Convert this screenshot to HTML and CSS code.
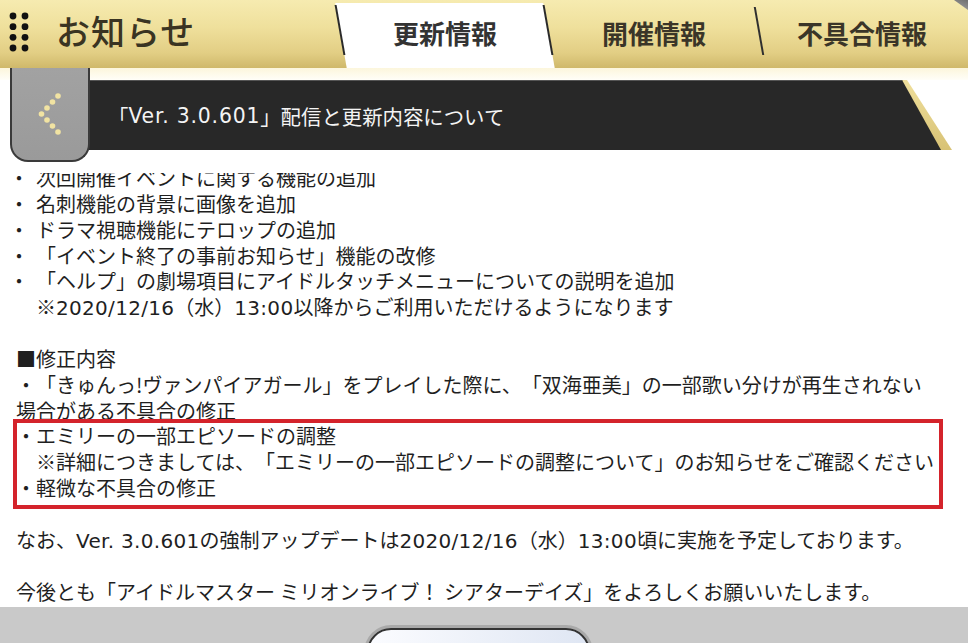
FILE: index.html
```html
<!DOCTYPE html>
<html lang="ja">
<head>
<meta charset="utf-8">
<title>お知らせ</title>
<link rel="stylesheet" href="styles.css">
</head>
<body>
<div class="app">
  <header class="topbar">
    <div class="brand">
      <svg class="menu-dots" width="22" height="44" viewBox="0 0 22 44" aria-hidden="true">
        <circle cx="5" cy="4" r="3.4"/><circle cx="17" cy="4" r="3.4"/>
        <circle cx="5" cy="14.7" r="3.4"/><circle cx="17" cy="14.7" r="3.4"/>
        <circle cx="5" cy="25.3" r="3.4"/><circle cx="17" cy="25.3" r="3.4"/>
        <circle cx="5" cy="36" r="3.4"/><circle cx="17" cy="36" r="3.4"/>
      </svg>
      <h1 class="title">お知らせ</h1>
    </div>
    <nav class="tabs">
      <div class="tab tab-active">更新情報</div>
      <div class="tab tab-2">開催情報</div>
      <div class="tab tab-3">不具合情報</div>
    </nav>
    <span class="corner"></span>
  </header>

  <div class="strip"></div>

  <div class="banner">
    <div class="banner-inner">「<span class="lat">Ver. 3.0.601</span>」配信と更新内容について</div>
  </div>

  <div class="back" aria-label="戻る">
    <svg width="24" height="44" viewBox="0 0 24 44" aria-hidden="true">
      <circle cx="20" cy="4" r="2.8"/><circle cx="14.5" cy="10" r="2.8"/>
      <circle cx="9" cy="16" r="2.8"/><circle cx="3.5" cy="22" r="2.8"/>
      <circle cx="9" cy="28" r="2.8"/><circle cx="14.5" cy="34" r="2.8"/>
      <circle cx="20" cy="40" r="2.8"/>
    </svg>
  </div>

  <main class="content">
    <div class="scroll">
      <p class="line"><span class="dot">・</span>次回開催イベントに関する機能の追加</p>
      <p class="line"><span class="dot">・</span>名刺機能の背景に画像を追加</p>
      <p class="line"><span class="dot">・</span>ドラマ視聴機能にテロップの追加</p>
      <p class="line"><span class="dot">・</span>「イベント終了の事前お知らせ」機能の改修</p>
      <p class="line"><span class="dot">・</span>「ヘルプ」の劇場項目にアイドルタッチメニューについての説明を追加</p>
      <p class="line">　※<span class="lat">2020/12/16</span>（水）<span class="lat">13:00</span>以降からご利用いただけるようになります</p>
      <p class="line blank"></p>
      <p class="line">■修正内容</p>
      <p class="line">・「きゅんっ!ヴァンパイアガール」をプレイした際に、「双海亜美」の一部歌い分けが再生されない</p>
      <p class="line">場合がある不具合の修正</p>
      <div class="highlight">
        <p class="line">・エミリーの一部エピソードの調整</p>
        <p class="line">　※詳細につきましては、「エミリーの一部エピソードの調整について」のお知らせをご確認ください</p>
        <p class="line">・軽微な不具合の修正</p>
      </div>
      <p class="line blank"></p>
      <p class="line">なお、<span class="lat">Ver. 3.0.601</span>の強制アップデートは<span class="lat">2020/12/16</span>（水）<span class="lat">13:00</span>頃に実施を予定しております。</p>
      <p class="line blank"></p>
      <p class="line">今後とも「アイドルマスター ミリオンライブ！ シアターデイズ」をよろしくお願いいたします。</p>
    </div>
  </main>

  <footer class="footer">
    <div class="footer-btn"></div>
  </footer>
</div>
</body>
</html>
```

FILE: styles.css
```css
* {
  box-sizing: border-box;
}

html, body {
  margin: 0;
  padding: 0;
  background: #ffffff;
}

body {
  font-family: "Noto Sans CJK JP", "Noto Sans", sans-serif;
  color: #222222;
  text-spacing-trim: space-all;
}

.lat {
  font-family: "DejaVu Sans", "Noto Sans CJK JP", sans-serif;
  letter-spacing: 0.3px;
}

.app {
  position: relative;
  width: 968px;
  height: 643px;
  overflow: hidden;
  display: flex;
  flex-direction: column;
  background: #ffffff;
}

/* ---------- header ---------- */
.topbar {
  position: relative;
  flex: 0 0 68px;
  height: 68px;
  display: flex;
  background: linear-gradient(180deg, #f6ebb0 0%, #efe09c 40%, #e2ce84 78%, #cfb86a 100%);
  z-index: 1;
}

.brand {
  width: 329px;
  flex: 0 0 329px;
  display: flex;
  align-items: center;
  padding-left: 8px;
}

.menu-dots {
  fill: #111111;
  flex: 0 0 auto;
}

.title {
  margin: 0 0 0 26px;
  font-size: 34px;
  line-height: 1;
  font-weight: 500;
  color: #3a3422;
  padding-bottom: 6px;
  letter-spacing: 1px;
}

.tabs {
  display: flex;
  flex: 1;
  height: 100%;
}

.tab {
  position: relative;
  z-index: 0;
  display: flex;
  align-items: center;
  justify-content: center;
  font-size: 26px;
  font-weight: 700;
  color: #3a3528;
  padding-bottom: 3px;
}

.tab-active {
  width: 232px;
  color: #333333;
}

.tab-active::before {
  content: "";
  position: absolute;
  left: 12px;
  right: 12px;
  top: 3px;
  bottom: 0;
  background: #ffffff;
  transform: skewX(10deg);
  z-index: -1;
}

.tab-active::after {
  content: "";
  position: absolute;
  left: 10px;
  right: 12px;
  top: 5px;
  height: 50px;
  border-left: 2px solid #2a2a2a;
  border-right: 2px solid #2a2a2a;
  transform: skewX(10deg);
}

.tab-2 {
  width: 186px;
}

.tab-3 {
  flex: 1;
  padding-left: 9px;
}

.tab-3::before {
  content: "";
  position: absolute;
  left: 11px;
  top: 7px;
  width: 2px;
  height: 48px;
  background: #2f2f2f;
  transform: skewX(10deg);
}

.corner {
  position: absolute;
  top: 0;
  right: 0;
  width: 14px;
  height: 10px;
  background: linear-gradient(200deg, #6f6f6f, #a5a5a5);
  clip-path: polygon(0 0, 100% 0, 100% 100%);
}

/* ---------- strip + banner ---------- */
.strip {
  flex: 0 0 12px;
  background: linear-gradient(180deg, #fcf6dc 0%, #fffef8 100%);
}

.banner {
  flex: 0 0 70px;
  margin-left: 50px;
  width: 902px;
  height: 70px;
  background: linear-gradient(180deg, #efdf9c 0%, #d8c275 100%);
  clip-path: polygon(0 0, 857px 0, 902px 100%, 0 100%);
}

.banner-inner {
  height: 100%;
  display: flex;
  align-items: center;
  padding-left: 58px;
  background: #282828;
  border-top: 1px solid #555555;
  clip-path: polygon(0 0, 852px 0, 891px 100%, 0 100%);
  color: #f4f4f4;
  font-size: 20.4px;
  font-weight: 400;
  white-space: nowrap;
}

.banner-inner .lat {
  letter-spacing: 0.8px;
}

/* ---------- back button (overlay) ---------- */
.back {
  position: absolute;
  left: 10px;
  top: 68px;
  width: 80px;
  height: 94px;
  border: 2px solid #3a3a3a;
  border-top: 0;
  border-radius: 0 0 18px 18px;
  background: linear-gradient(180deg, #a2a2a2 0%, #9a9a9a 100%);
  display: flex;
  align-items: center;
  justify-content: center;
  z-index: 2;
}

.back svg {
  fill: #f1e3a2;
}

/* ---------- content ---------- */
.content {
  flex: 1;
  margin-top: 23px;
  overflow: hidden;
  position: relative;
}

.scroll {
  margin-top: -8px;
  padding-left: 16px;
}

.line {
  margin: 0;
  font-size: 20px;
  line-height: 25.85px;
  height: 25.85px;
  white-space: nowrap;
  color: #1f1f1f;
}

.dot {
  display: inline-block;
  width: 1em;
  text-indent: -7px;
}

.highlight {
  width: 922px;
  margin-left: 1px;
  padding-bottom: 4px;
  margin-bottom: -4px;
  outline: 4px solid #d4232b;
}

.highlight .line {
  margin-left: -1px;
}

/* ---------- footer ---------- */
.footer {
  flex: 0 0 36px;
  height: 36px;
  background: #c9c9c9;
  overflow: hidden;
  padding: 21px 0 0 367px;
}

.footer-btn {
  width: 223px;
  height: 40px;
  border: 2px solid #333333;
  border-radius: 24px 24px 0 0;
  box-shadow: 0 0 0 3px #a9a9a9;
  background: linear-gradient(90deg, #fbfcff 0%, #dfe6f3 100%);
}
```
